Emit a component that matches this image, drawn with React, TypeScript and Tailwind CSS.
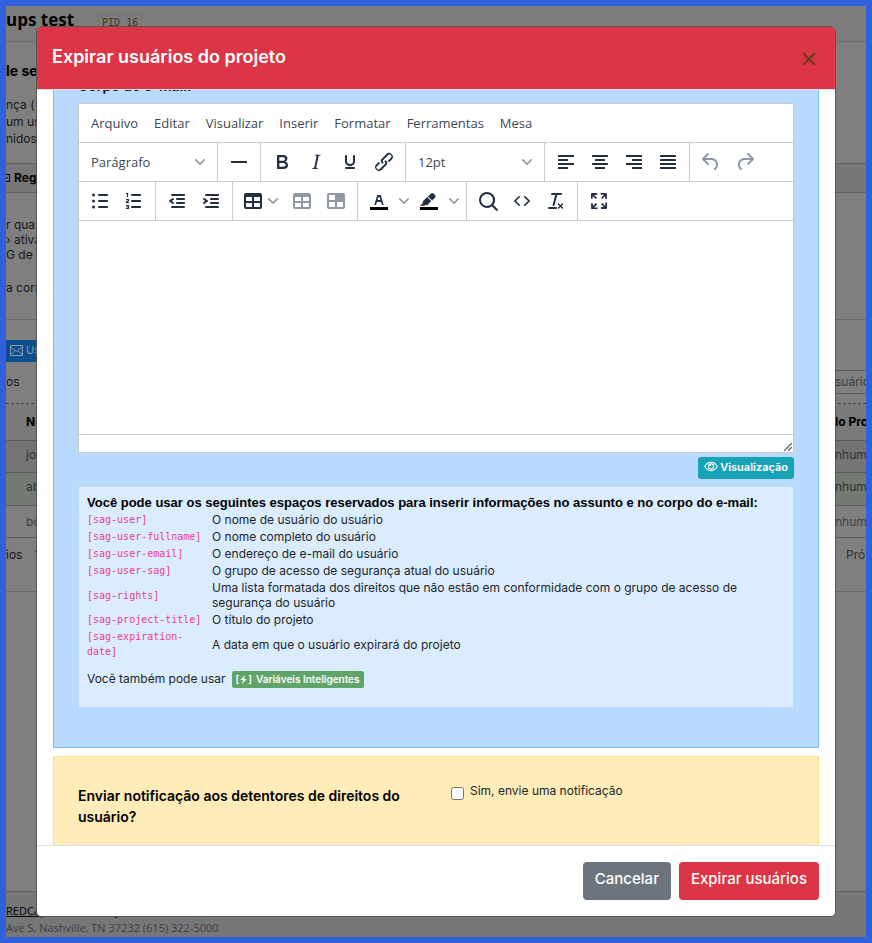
import type { ReactNode } from "react";

const sans = "font-['Inter','Liberation_Sans',sans-serif]";

function Icon({ children, className = "" }: { children: ReactNode; className?: string }) {
  return (
    <svg width="24" height="24" viewBox="0 0 24 24" fill="currentColor" fillRule="evenodd" className={"shrink-0 " + className} aria-hidden="true">
      {children}
    </svg>
  );
}

function Chevron() {
  return (
    <svg width="10" height="10" viewBox="0 0 10 10" fill="#8f98a3" className="shrink-0" aria-hidden="true">
      <path d="M8.7 2.2c.3-.3.8-.3 1 0 .4.4.4.9 0 1.2L5.7 7.8c-.3.3-.9.3-1.2 0L.2 3.4a.8.8 0 0 1 0-1.2c.3-.3.8-.3 1.1 0L5 6l3.700-3.800z" />
    </svg>
  );
}

function Group({ children, last = false }: { children: ReactNode; last?: boolean }) {
  return <div className={"flex h-full items-center px-1 " + (last ? "" : "border-r border-[#ccc]")}>{children}</div>;
}

function Tool({ label, children, disabled = false }: { label: string; children: ReactNode; disabled?: boolean }) {
  return (
    <button type="button" aria-label={label} disabled={disabled} className={"flex h-[34px] w-[34px] items-center justify-center " + (disabled ? "text-[#8f98a3]" : "text-[#222f3e]")}>
      {children}
    </button>
  );
}

function SplitTool({ label, children }: { label: string; children: ReactNode }) {
  return (
    <div className="flex items-center">
      <Tool label={label}>{children}</Tool>
      <button type="button" aria-label={label + ": opções"} className="flex h-[34px] w-4 items-center justify-center">
        <Chevron />
      </button>
    </div>
  );
}

function ToolSelect({ label, value }: { label: string; value: string }) {
  return (
    <div className="relative flex h-[34px] w-[130px] items-center">
      <select aria-label={label} className="h-full w-full appearance-none bg-transparent px-2 pt-0.5 font-['Open_Sans','Noto_Sans',sans-serif] text-[13px] text-[#3c4754]">
        <option>{value}</option>
      </select>
      <span className="pointer-events-none absolute right-2">
        <Chevron />
      </span>
    </div>
  );
}

function Bars({ rows }: { rows: [number, number][] }) {
  return (
    <Icon>
      {rows.map(([x, w], i) => (
        <rect key={i} x={x} y={5 + i * 4} width={w} height="2" rx="0.6" />
      ))}
    </Icon>
  );
}

const placeholders: [string, string][] = [
  ["[sag-user]", "O nome de usuário do usuário"],
  ["[sag-user-fullname]", "O nome completo do usuário"],
  ["[sag-user-email]", "O endereço de e-mail do usuário"],
  ["[sag-user-sag]", "O grupo de acesso de segurança atual do usuário"],
  ["[sag-rights]", "Uma lista formatada dos direitos que não estão em conformidade com o grupo de acesso de segurança do usuário"],
  ["[sag-project-title]", "O título do projeto"],
  ["[sag-expiration-date]", "A data em que o usuário expirará do projeto"],
];

function Editor() {
  return (
    <div className="border border-[#ccc] bg-white">
      <div className="flex h-[39px] items-center border-b border-[#ccc] px-1 pt-0.5 font-['Open_Sans','Noto_Sans',sans-serif] text-[13px] text-[#3c4754]">
        {["Arquivo", "Editar", "Visualizar", "Inserir", "Formatar", "Ferramentas", "Mesa"].map((m) => (
          <button key={m} type="button" className="px-2">
            {m}
          </button>
        ))}
      </div>
      <div className="flex h-[39px] items-center border-b border-[#ccc]">
        <Group>
          <ToolSelect label="Formato do bloco" value="Parágrafo" />
        </Group>
        <Group>
          <Tool label="Linha horizontal">
            <Icon>
              <rect x="4" y="11" width="16" height="2" rx="0.6" />
            </Icon>
          </Tool>
        </Group>
        <Group>
          <Tool label="Negrito">
            <Icon>
              <path d="M7.8 19c-.3 0-.5 0-.6-.2l-.2-.5V5.7c0-.2 0-.4.2-.5l.6-.2h5c1.5 0 2.7.3 3.5 1 .7.6 1.1 1.4 1.1 2.5a3 3 0 0 1-.6 1.9c-.4.6-1 1-1.6 1.2.4.1.9.3 1.3.6s.8.7 1 1.2c.4.4.5 1 .5 1.6 0 1.3-.4 2.3-1.3 3-.8.7-2.1 1-3.8 1H7.8zm5-8.3c.6 0 1.2-.1 1.6-.5.4-.3.6-.7.6-1.3 0-1.1-.8-1.7-2.3-1.7H9.3v3.5h3.4zm.5 6c.7 0 1.3-.1 1.7-.4.4-.4.6-.9.6-1.5s-.2-1-.7-1.4c-.4-.3-1-.4-2-.4H9.400v3.800h4z" />
            </Icon>
          </Tool>
          <Tool label="Itálico">
            <Icon>
              <path d="M16.7 4.7l-.1.9h-.3c-.6 0-1 0-1.4.3-.3.3-.4.6-.5 1.1l-2.1 9.8v.6c0 .5.4.8 1.4.8h.2l-.2.8H8l.2-.8h.2c1.1 0 1.8-.5 2-1.5l2-9.8.1-.5c0-.6-.4-.8-1.4-.8h-.3l.2-.9h5.8z" />
            </Icon>
          </Tool>
          <Tool label="Sublinhado">
            <Icon>
              <path d="M16 5c.6 0 1 .4 1 1v5.5a4 4 0 0 1-.4 1.8l-1 1.4a5.3 5.3 0 0 1-5.5 1 5 5 0 0 1-1.6-1c-.5-.4-.8-.9-1.1-1.4a4 4 0 0 1-.4-1.8V6c0-.6.4-1 1-1s1 .4 1 1v5.5c0 .3 0 .6.2 1l.6.7a3.3 3.3 0 0 0 2.2.8 3.4 3.4 0 0 0 2.2-.8c.3-.2.4-.5.6-.8l.2-.9V6c0-.6.4-1 1-1zM8 17h8c.6 0 1 .4 1 1s-.4 1-1 1H8a1 1 0 0 1 0-2z" />
            </Icon>
          </Tool>
          <Tool label="Link">
            <Icon>
              <path d="M6.2 12.3a1 1 0 0 1 1.4 1.4l-2.1 2a2 2 0 1 0 2.7 2.8l4.8-4.8a1 1 0 0 0 0-1.4 1 1 0 1 1 1.4-1.3 2.9 2.9 0 0 1 0 4L9.6 20a3.9 3.9 0 0 1-5.5-5.5l2-2zm11.6-.6a1 1 0 0 1-1.4-1.4l2-2a2 2 0 1 0-2.6-2.8L11 10.3a1 1 0 0 0 0 1.4A1 1 0 1 1 9.6 13a2.9 2.9 0 0 1 0-4L14.4 4a3.9 3.9 0 0 1 5.5 5.5l-2 2z" />
            </Icon>
          </Tool>
        </Group>
        <Group>
          <ToolSelect label="Tamanho da fonte" value="12pt" />
        </Group>
        <Group>
          <Tool label="Alinhar à esquerda">
            <Bars rows={[[4, 16], [4, 10], [4, 16], [4, 10]]} />
          </Tool>
          <Tool label="Centralizar">
            <Bars rows={[[4, 16], [7, 10], [4, 16], [7, 10]]} />
          </Tool>
          <Tool label="Alinhar à direita">
            <Bars rows={[[4, 16], [10, 10], [4, 16], [10, 10]]} />
          </Tool>
          <Tool label="Justificar">
            <Bars rows={[[4, 16], [4, 16], [4, 16], [4, 16]]} />
          </Tool>
        </Group>
        <Group last>
          <Tool label="Desfazer" disabled>
            <Icon>
              <path d="M6.4 8H12c3.7 0 6.2 2 6.8 5.1.6 2.7-.4 5.6-2.3 6.8a1 1 0 0 1-1-1.8c1.1-.6 1.8-2.7 1.4-4.6-.5-2.1-2.1-3.5-4.9-3.5H6.4l3.3 3.3a1 1 0 1 1-1.4 1.4l-5-5a1 1 0 0 1 0-1.4l5-5a1 1 0 0 1 1.4 1.4L6.4 8z" />
            </Icon>
          </Tool>
          <Tool label="Refazer" disabled>
            <Icon>
              <path d="M17.6 10H12c-2.8 0-4.4 1.4-4.9 3.5-.4 2 .3 4 1.4 4.6a1 1 0 1 1-1 1.8c-2-1.2-2.9-4.1-2.3-6.8.6-3 3-5.1 6.8-5.1h5.6l-3.3-3.3a1 1 0 1 1 1.4-1.4l5 5a1 1 0 0 1 0 1.4l-5 5a1 1 0 0 1-1.4-1.4l3.3-3.3z" />
            </Icon>
          </Tool>
        </Group>
      </div>
      <div className="flex h-[39px] items-center border-b border-[#ccc]">
        <Group>
          <Tool label="Lista com marcadores">
            <Icon>
              <path d="M11 5h8c.6 0 1 .4 1 1s-.4 1-1 1h-8a1 1 0 0 1 0-2zm0 6h8c.6 0 1 .4 1 1s-.4 1-1 1h-8a1 1 0 0 1 0-2zm0 6h8c.6 0 1 .4 1 1s-.4 1-1 1h-8a1 1 0 0 1 0-2z" />
              <circle cx="5.5" cy="6" r="1.5" />
              <circle cx="5.5" cy="12" r="1.5" />
              <circle cx="5.5" cy="18" r="1.5" />
            </Icon>
          </Tool>
          <Tool label="Lista numerada">
            <Icon>
              <path d="M10 5h8c.6 0 1 .4 1 1s-.4 1-1 1h-8a1 1 0 0 1 0-2zm0 6h8c.6 0 1 .4 1 1s-.4 1-1 1h-8a1 1 0 0 1 0-2zm0 6h8c.6 0 1 .4 1 1s-.4 1-1 1h-8a1 1 0 1 1 0-2z" />
              <path fill="none" stroke="currentColor" strokeWidth="1.2" d="M4 4.500h1.500v3.500M4 10.500h2.500v1.200l-2 1v1h2.300M4 16.500h2.500v3H4M4.500 18h2" />
            </Icon>
          </Tool>
        </Group>
        <Group>
          <Tool label="Diminuir recuo">
            <Icon>
              <path d="M7 5h12c.6 0 1 .4 1 1s-.4 1-1 1H7a1 1 0 1 1 0-2zm5 4h7c.6 0 1 .4 1 1s-.4 1-1 1h-7a1 1 0 0 1 0-2zm0 4h7c.6 0 1 .4 1 1s-.4 1-1 1h-7a1 1 0 0 1 0-2zm-5 4h12a1 1 0 0 1 0 2H7a1 1 0 0 1 0-2zm1.6-3.8a1 1 0 0 1-1.2 1.6l-3-2a1 1 0 0 1 0-1.6l3-2a1 1 0 0 1 1.2 1.6L6.8 12l1.8 1.2z" />
            </Icon>
          </Tool>
          <Tool label="Aumentar recuo">
            <Icon>
              <path d="M7 5h12c.6 0 1 .4 1 1s-.4 1-1 1H7a1 1 0 1 1 0-2zm5 4h7c.6 0 1 .4 1 1s-.4 1-1 1h-7a1 1 0 0 1 0-2zm0 4h7c.6 0 1 .4 1 1s-.4 1-1 1h-7a1 1 0 0 1 0-2zm-5 4h12a1 1 0 0 1 0 2H7a1 1 0 0 1 0-2zm-2.600-3.800L6.200 12l-1.800-1.200a1 1 0 0 1 1.200-1.600l3 2a1 1 0 0 1 0 1.600l-3 2a1 1 0 1 1-1.200-1.600z" />
            </Icon>
          </Tool>
        </Group>
        <Group>
          <button type="button" aria-label="Tabela" className="flex h-[34px] w-12 items-center gap-[3px] pl-1 text-[#222f3e]">
            <Icon>
              <path d="M19 4a2 2 0 0 1 2 2v12a2 2 0 0 1-2 2H5a2 2 0 0 1-2-2V6c0-1.1.9-2 2-2h14zM5 14v4h6v-4H5zm14 0h-6v4h6v-4zm0-6h-6v4h6V8zM5 12h6V8H5v4z" />
            </Icon>
            <Chevron />
          </button>
          <Tool label="Propriedades da tabela" disabled>
            <Icon>
              <path d="M19 4a2 2 0 0 1 2 2v12a2 2 0 0 1-2 2H5a2 2 0 0 1-2-2V6c0-1.1.9-2 2-2h14zM5 14v4h6v-4H5zm14 0h-6v4h6v-4zm0-6h-6v4h6V8zM5 12h6V8H5v4z" />
            </Icon>
          </Tool>
          <Tool label="Propriedades da célula" disabled>
            <Icon>
              <path d="M19 4a2 2 0 0 1 2 2v12a2 2 0 0 1-2 2H5a2 2 0 0 1-2-2V6c0-1.100.900-2 2-2h14zM5 13v5h6v-5H5zm14 0h-6v5h6v-5zM5 11h6V6H5v5z" />
            </Icon>
          </Tool>
        </Group>
        <Group>
          <SplitTool label="Cor do texto">
            <Icon>
              <path fill="#000" d="M3 18h18v3H3z" />
              <path d="M8.7 16h-.8a.5.5 0 0 1-.5-.6l2.7-9c.1-.3.3-.4.5-.4h2.8c.2 0 .4.1.5.4l2.7 9a.5.5 0 0 1-.5.6h-.8a.5.5 0 0 1-.4-.4l-.7-2.2c0-.3-.3-.4-.5-.4h-3.4c-.2 0-.4.1-.5.4l-.7 2.2c0 .3-.2.4-.4.4zm2.6-7.6l-.6 2a.5.5 0 0 0 .5.6h1.6a.5.5 0 0 0 .5-.6l-.6-2c0-.3-.3-.4-.5-.4h-.4c-.2 0-.4.1-.5.4z" />
            </Icon>
          </SplitTool>
          <SplitTool label="Cor de fundo">
            <Icon>
              <path fill="#000" d="M3 18h18v3H3z" />
              <path d="M7.7 16.7H3l3.3-3.3-.7-.8L10.2 8l4 4.1-4 4.2c-.2.2-.6.2-.8 0l-.6-.7-1.1 1.1zm5-7.5L11 7.4l3-2.9a2 2 0 0 1 2.6 0L18 6c.7.7.7 2 0 2.7l-2.9 2.9-1.8-1.8-.5-.6" />
            </Icon>
          </SplitTool>
        </Group>
        <Group>
          <Tool label="Localizar e substituir">
            <Icon>
              <path d="M16 17.3a8 8 0 1 1 1.4-1.4l4.3 4.4a1 1 0 0 1-1.4 1.4l-4.4-4.3zm-5-.3a6 6 0 1 0 0-12 6 6 0 0 0 0 12z" />
            </Icon>
          </Tool>
          <Tool label="Código-fonte">
            <Icon>
              <path d="M9.8 15.7c.3.3.3.8 0 1-.3.4-.9.4-1.2 0l-4.4-4.1a.8.8 0 0 1 0-1.2l4.4-4.2c.3-.3.9-.3 1.2 0 .3.3.3.8 0 1.1L6 12l3.8 3.7zM14.2 15.7c-.3.3-.3.8 0 1 .4.4.9.4 1.2 0l4.4-4.1c.3-.3.3-.9 0-1.2l-4.4-4.2a.8.8 0 0 0-1.2 0c-.3.3-.3.8 0 1.1L18 12l-3.8 3.7z" />
            </Icon>
          </Tool>
          <Tool label="Limpar formatação">
            <Icon>
              <path d="M13.2 6a1 1 0 0 1 0 .2l-2.6 10a1 1 0 0 1-1 .8h-.2a.8.8 0 0 1-.8-1l2.6-10H8a1 1 0 1 1 0-2h9a1 1 0 0 1 0 2h-3.8zM5 18h7a1 1 0 0 1 0 2H5a1 1 0 0 1 0-2zm13 1.5L16.5 18 15 19.5a.7.7 0 0 1-1-1l1.5-1.5-1.5-1.5a.7.7 0 0 1 1-1l1.5 1.5 1.5-1.5a.7.7 0 0 1 1 1L17.5 17l1.5 1.5a.7.7 0 0 1-1 1z" />
            </Icon>
          </Tool>
        </Group>
        <Group last>
          <Tool label="Tela cheia">
            <Icon>
              <path d="M15.3 10l-1.2-1.3 2.9-3h-2.3a.9.9 0 1 1 0-1.7H19c.5 0 .9.4.9.9v4.4a.9.9 0 1 1-1.8 0V7l-2.9 3zm0 4l3 3v-2.3a.9.9 0 1 1 1.7 0V19c0 .5-.4.9-.9.9h-4.4a.9.9 0 1 1 0-1.8H17l-3-2.9 1.3-1.2zM10 15.4l-2.9 3h2.3a.9.9 0 1 1 0 1.7H5a.9.9 0 0 1-.9-.9v-4.4a.9.9 0 1 1 1.8 0V17l2.9-3 1.2 1.3zM8.7 10L5.7 7v2.3a.9.9 0 0 1-1.7 0V5c0-.5.4-.9.9-.9h4.4a.9.9 0 0 1 0 1.8H7l3 2.9-1.3 1.2z" />
            </Icon>
          </Tool>
        </Group>
      </div>
      <textarea id="email-body" className="block h-[213px] w-full resize-none p-4 text-base outline-none" />
      <div className="flex h-[18px] items-end justify-end border-t border-[#ccc]">
        <svg width="10" height="10" viewBox="0 0 10 10" fill="none" stroke="#5b6570" strokeWidth="1.3" strokeLinecap="round" aria-hidden="true">
          <path d="M8.5 1.5l-7 7M8.5 5.5l-3 3" />
        </svg>
      </div>
    </div>
  );
}

function Modal() {
  return (
    <div role="dialog" aria-labelledby="modal-title" className="flex h-full w-full flex-col overflow-hidden rounded-[5px] border border-[#555] bg-white">
      <header className="flex h-[63px] shrink-0 items-center justify-between border-b border-[#dee2e6] bg-[#dc3545] px-[15px]">
        <h1 id="modal-title" className="pb-1 text-[18px] font-semibold text-white">
          Expirar usuários do projeto
        </h1>
        <button type="button" aria-label="Fechar" className="pt-1.5 pr-1 pb-1 pl-1 text-[#6b3a1f]">
          <svg width="14" height="14" viewBox="0 0 14 14" fill="none" stroke="currentColor" strokeWidth="2" aria-hidden="true">
            <path d="M1 1l12 12M13 1L1 13" />
          </svg>
        </button>
      </header>

      <div className="min-h-0 flex-1 overflow-hidden px-4">
        <section className="-mt-4 border border-[#7abaff] bg-[#b8daff] px-6 pb-10">
          <label htmlFor="email-body" className="block h-7 text-[14px] leading-[22px] font-semibold text-black">
            Corpo do e-mail:
          </label>
          <Editor />
          <div className="mt-1 flex justify-end">
            <button type="button" className="flex h-[22px] items-center gap-0.5 rounded-[3px] bg-[#17a2b8] px-1.5 pb-0.5 text-[11px] font-semibold text-white">
              <svg width="14" height="14" viewBox="0 0 14 14" fill="none" stroke="currentColor" strokeWidth="1.1" aria-hidden="true">
                <path d="M.8 6.500C2.200 4 4.400 2.300 7 2.300S11.800 4 13.200 6.500C11.800 9 9.600 10.700 7 10.700S2.200 9 .8 6.500z" />
                <circle cx="7" cy="6.500" r="2.600" />
                <path d="M5.600 6.500A1.400 1.400 0 0 1 7 5.100" />
              </svg>
              Visualização
            </button>
          </div>
          <div className="mx-px mt-2 bg-[#dbecff] px-2 pt-2 pb-[19px] text-[12px] text-[#212529]">
            <p className="font-['Liberation_Sans',sans-serif] text-[13px] leading-4 font-bold text-black">
              Você pode usar os seguintes espaços reservados para inserir informações no assunto e no corpo do e-mail:
            </p>
            <table className="w-full table-fixed border-collapse leading-[15px]">
              <colgroup>
                <col className="w-[125px]" />
                <col />
              </colgroup>
              <tbody>
                {placeholders.map(([code, text]) => (
                  <tr key={code}>
                    <td className="py-px pr-1 align-middle">
                      <code className="block font-['DejaVu_Sans_Mono','Liberation_Mono',monospace] text-[10px] text-[#e83e8c]">{code}</code>
                    </td>
                    <td className="py-px pr-8 align-middle">{text}</td>
                  </tr>
                ))}
              </tbody>
            </table>
            <p className="mt-2.5 flex items-center gap-1.5 leading-[18px]">
              Você também pode usar
              <button type="button" className="flex h-[17px] items-center rounded-[2px] bg-[#5fa468] px-1 text-[10px] font-semibold text-white">
                [
                <svg width="9" height="9" viewBox="0 0 8 9" fill="currentColor" aria-hidden="true">
                  <path d="M5.500 0L.8 5h2.700L2.500 9l4.700-5H4.500z" />
                </svg>
                ]<span className="ml-1">Variáveis Inteligentes</span>
              </button>
            </p>
          </div>
        </section>

        <section className="mt-2 grid grid-cols-2 border border-[#ffdf7e] bg-[#ffecb8] px-6 pt-7 pb-10">
          <label htmlFor="notify" className="pr-8 text-[14px] leading-[21px] font-semibold text-black">
            Enviar notificação aos detentores de direitos do usuário?
          </label>
          <div className="flex h-4 items-center gap-1.5 pl-[15px] text-[12px] text-[#212529]">
            <input id="notify" type="checkbox" className="h-[13px] w-[13px]" />
            <label htmlFor="notify" className="pb-1">
              Sim, envie uma notificação
            </label>
          </div>
        </section>
      </div>

      <footer className="flex shrink-0 items-center justify-end gap-2 border-t border-[#dee2e6] p-4 text-[15px] font-medium text-white">
        <button type="button" className="h-[38px] rounded-[4px] bg-[#6c757d] px-3 pb-1">
          Cancelar
        </button>
        <button type="button" className="h-[38px] rounded-[4px] bg-[#dc3545] px-3 pb-1">
          Expirar usuários
        </button>
      </footer>
    </div>
  );
}

function TableRow({ left, right, className }: { left: string; right: string; className: string }) {
  return (
    <div className={"flex items-center justify-between border-b border-[#5c5c5c] " + className}>
      <span className="pl-5">{left}</span>
      <span className="w-[31px] whitespace-nowrap">{right}</span>
    </div>
  );
}

function Page() {
  return (
    <div className="flex h-full flex-col overflow-hidden bg-[#7f7f7f] text-[12px] text-[#16181a]">
      <div className="flex h-9 shrink-0 items-center gap-6 border-b border-[#6b6b6b] bg-[#7c7c7c]">
        <span className="mb-2 font-['Open_Sans','Noto_Sans',sans-serif] text-[17px] leading-6 font-bold text-black">ups test</span>
        <span className="mb-0.5 rounded-[3px] border border-dotted border-[#6b6b6b] px-[3px] font-['DejaVu_Sans_Mono',monospace] text-[10px] text-[#4b2f22]">PID 16</span>
      </div>
      <h2 className="mt-[19px] shrink-0 text-[14px] leading-5 font-bold text-black">le se</h2>
      <div className="mt-[15px] h-[67px] shrink-0 leading-[17px]">
        <p>nça (</p>
        <p>um us</p>
        <p>nidos</p>
      </div>
      <div className="flex h-[30px] shrink-0 items-center gap-1 border-y border-[#606060] bg-[#787878] font-bold text-black">
        <svg width="4" height="8" viewBox="0 0 4 8" fill="none" stroke="currentColor" aria-hidden="true">
          <path d="M0 .5h3.500v7H0M0 5l2-2" />
        </svg>
        Reg
      </div>
      <div className="h-[127px] shrink-0 border-b border-[#6b6b6b] pt-6 leading-[15px]">
        <p>r qua</p>
        <p>› ativa</p>
        <p>G de u</p>
        <p className="mt-[18px]">a corr</p>
      </div>
      <div className="mt-5 flex h-[22px] shrink-0">
        <button type="button" className="flex items-center gap-[3px] bg-[#0c4f8f] px-1 pb-0.5 text-[11px] text-[#8c9cab]">
          <svg width="13" height="11" viewBox="0 0 13 11" fill="none" stroke="currentColor" aria-hidden="true">
            <path d="M.5.5h12v10H.5zM.5 2l6 4.500 6-4.500M.5 10l4-4M12.500 10l-4-4" />
          </svg>
          Usuários
        </button>
      </div>
      <div className="mt-2 flex h-6 shrink-0 items-center justify-between">
        <span>os</span>
        <span className="h-6 w-[31px] border-y border-[#5c5c5c] leading-[22px] whitespace-nowrap text-[#3b4045]">suário</span>
      </div>
      <div className="mt-[9px] shrink-0 border-t border-dashed border-[#444]">
        <TableRow left="No" right="lo Pro" className="h-[37px] bg-[#7a7a7a] font-bold text-black" />
        <TableRow left="jo" right="nhum" className="h-8 bg-[#747474] pb-1 text-[#2f3337]" />
        <TableRow left="ab" right="nhum" className="h-[33px] bg-[#737a71] pb-1 text-[#2f3337]" />
        <TableRow left="bo" right="nhum" className="h-8 text-[#3f4347]" />
      </div>
      <div className="flex h-[54px] shrink-0 items-start justify-between border-b border-[#6b6b6b] pt-2">
        <span className="flex gap-3">
          ios <span>1</span>
        </span>
        <span className="w-5 whitespace-nowrap text-[#2f3337]">Pró</span>
      </div>
      <footer className="mt-auto h-[46px] shrink-0 border-t border-[#606060] bg-[#777] pt-[10px] font-['Open_Sans','Noto_Sans',sans-serif] text-[11px] leading-[17px] text-[#3b4045]">
        <p className="flex gap-4">
          {["REDCap", "Sobre", "Ajuda", "Treinamento", "Fórum"].map((l) => (
            <a key={l} href="#" className="text-black underline">
              {l}
            </a>
          ))}
        </p>
        <p>Ave S, Nashville, TN 37232 (615) 322-5000</p>
      </footer>
    </div>
  );
}

export default function App() {
  return (
    <div className={"relative h-screen overflow-hidden border-[6px] border-[#3060dc] " + sans}>
      <Page />
      <div className="absolute inset-0 px-[30px] py-5">
        <Modal />
      </div>
    </div>
  );
}
